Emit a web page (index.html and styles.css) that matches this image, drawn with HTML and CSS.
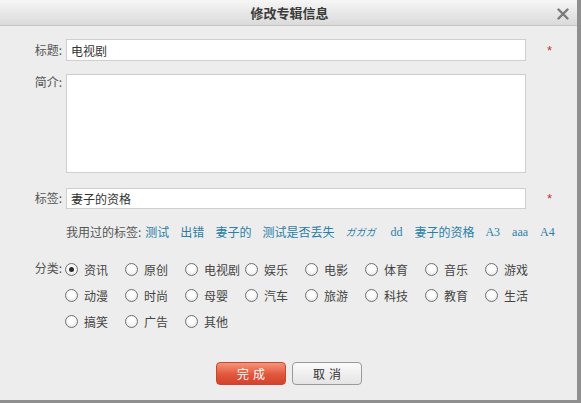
FILE: index.html
```html
<!DOCTYPE html>
<html lang="zh-CN">
<head>
<meta charset="utf-8">
<title>修改专辑信息</title>
<link rel="stylesheet" href="styles.css">
</head>
<body>
<div class="dialog">
  <div class="titlebar">
    <span class="title">修改专辑信息</span>
    <span class="close" aria-label="关闭">
      <svg width="12" height="12" viewBox="0 0 12 12"><path d="M1.5 1.5 L10.5 10.5 M10.5 1.5 L1.5 10.5" stroke="#7a7a7a" stroke-width="2.4" stroke-linecap="round"/></svg>
    </span>
  </div>
  <div class="form">
    <div class="row row-title">
      <label class="label">标题:</label>
      <input class="field" type="text" value="电视剧">
      <span class="star">*</span>
    </div>
    <div class="row row-desc">
      <label class="label label-top">简介:</label>
      <textarea class="field area"></textarea>
      <span></span>
    </div>
    <div class="row row-tag">
      <label class="label">标签:</label>
      <input class="field field-tag" type="text" value="妻子的资格">
      <span class="star">*</span>
    </div>
    <div class="tags">
      <span class="tags-label">我用过的标签:</span>
      <a class="tag">测试</a>
      <a class="tag">出错</a>
      <a class="tag">妻子的</a>
      <a class="tag">测试是否丢失</a>
      <a class="tag tag-jp">ガガガ</a>
      <a class="tag tag-serif">dd</a>
      <a class="tag">妻子的资格</a>
      <a class="tag tag-serif">A3</a>
      <a class="tag tag-serif">aaa</a>
      <a class="tag tag-serif">A4</a>
    </div>
    <div class="cats">
      <span class="label cat-label">分类:</span>
      <div class="cat-grid">
        <label class="opt"><span class="radio checked"></span>资讯</label>
        <label class="opt"><span class="radio"></span>原创</label>
        <label class="opt"><span class="radio"></span>电视剧</label>
        <label class="opt"><span class="radio"></span>娱乐</label>
        <label class="opt"><span class="radio"></span>电影</label>
        <label class="opt"><span class="radio"></span>体育</label>
        <label class="opt"><span class="radio"></span>音乐</label>
        <label class="opt"><span class="radio"></span>游戏</label>
        <label class="opt"><span class="radio"></span>动漫</label>
        <label class="opt"><span class="radio"></span>时尚</label>
        <label class="opt"><span class="radio"></span>母婴</label>
        <label class="opt"><span class="radio"></span>汽车</label>
        <label class="opt"><span class="radio"></span>旅游</label>
        <label class="opt"><span class="radio"></span>科技</label>
        <label class="opt"><span class="radio"></span>教育</label>
        <label class="opt"><span class="radio"></span>生活</label>
        <label class="opt"><span class="radio"></span>搞笑</label>
        <label class="opt"><span class="radio"></span>广告</label>
        <label class="opt"><span class="radio"></span>其他</label>
      </div>
    </div>
    <div class="buttons">
      <button class="btn btn-ok">完成</button>
      <button class="btn btn-cancel">取消</button>
    </div>
  </div>
</div>
</body>
</html>
```
FILE: styles.css
```css
* { box-sizing: border-box; }
html, body { margin: 0; padding: 0; }
body {
  width: 581px;
  height: 403px;
  background: #8f8f8f;
  font-family: "Noto Sans CJK SC", "Noto Sans", sans-serif;
  font-size: 12px;
  color: #555;
  overflow: hidden;
}
.dialog {
  width: 577px;
  height: 400px;
  background: #ededed;
}
.titlebar {
  height: 26px;
  background: linear-gradient(#f6f6f6, #dadada);
  border-bottom: 1px solid #c4c4c4;
  display: flex;
  align-items: center;
  justify-content: center;
  position: relative;
}
.title {
  font-size: 13px;
  font-weight: bold;
  color: #3a3a3a;
  margin-left: 2px;
}
.close {
  position: absolute;
  right: 8px;
  top: 8px;
  width: 12px;
  height: 12px;
  display: block;
}
.close svg { display: block; }
.form { display: flex; flex-direction: column; }
.row {
  display: grid;
  grid-template-columns: 62px 460px 50px;
  column-gap: 4px;
  align-items: center;
}
.row-title { margin-top: 13px; }
.row-desc { margin-top: 13px; align-items: start; }
.row-tag { margin-top: 14px; }
.label {
  text-align: right;
  color: #555;
  line-height: 22px;
}
.label-top { line-height: 16px; }
.field {
  display: block;
  width: 460px;
  height: 22px;
  border: 1px solid #cfcfcf;
  background: #fff;
  font-family: inherit;
  font-size: 12px;
  color: #333;
  padding: 0 4px;
  margin: 0;
  outline: none;
}
.field-tag { height: 21px; }
.area {
  height: 99px;
  resize: none;
}
.star {
  color: #c0392b;
  font-family: "Liberation Sans", sans-serif;
  font-size: 13px;
  padding-left: 17px;
  line-height: 12px;
  margin-top: 2px;
}
.tags {
  margin-top: 15px;
  margin-left: 66px;
  display: flex;
  align-items: center;
  line-height: 16px;
  white-space: nowrap;
}
.tags-label { color: #555; margin-right: 4px; }
.tag {
  color: #2a7fa6;
  margin-right: 11px;
  cursor: pointer;
}
.tag-serif {
  font-family: "Liberation Serif", serif;
  font-size: 12px;
  margin-right: 12px;
}
.tag-jp {
  font-family: "Noto Sans CJK JP", sans-serif;
  font-size: 10px;
  font-style: italic;
  margin-right: 15px;
}
.cats {
  margin-top: 16px;
  display: flex;
  align-items: flex-start;
}
.cat-label {
  width: 62px;
  line-height: 26px;
  margin-top: -1px;
}
.cat-grid {
  margin-left: 3px;
  display: grid;
  grid-template-columns: repeat(8, 60px);
  grid-auto-rows: 26px;
}
.opt {
  display: flex;
  align-items: center;
  color: #444;
  white-space: nowrap;
}
.radio {
  width: 13px;
  height: 13px;
  border-radius: 50%;
  border: 1px solid #707070;
  background: radial-gradient(circle at 50% 40%, #ffffff 30%, #dcdcdc 100%);
  margin-right: 6px;
  position: relative;
  flex: none;
}
.radio.checked::after {
  content: "";
  position: absolute;
  left: 3px;
  top: 3px;
  width: 5px;
  height: 5px;
  border-radius: 50%;
  background: #2b2b2b;
}
.buttons {
  margin-top: 28px;
  display: flex;
  justify-content: center;
  gap: 6px;
  padding-left: 1px;
}
.btn {
  width: 70px;
  height: 23px;
  border-radius: 4px;
  font-family: inherit;
  font-size: 12px;
  letter-spacing: 4px;
  padding: 0 0 0 4px;
  cursor: pointer;
}
.btn-ok {
  color: #fff;
  border: 1px solid #c9472f;
  background: linear-gradient(#f59478, #e0573d 55%, #d2432a);
}
.btn-cancel {
  color: #333;
  border: 1px solid #9a9a9a;
  background: linear-gradient(#fbfbfb, #e4e4e4);
}
```
